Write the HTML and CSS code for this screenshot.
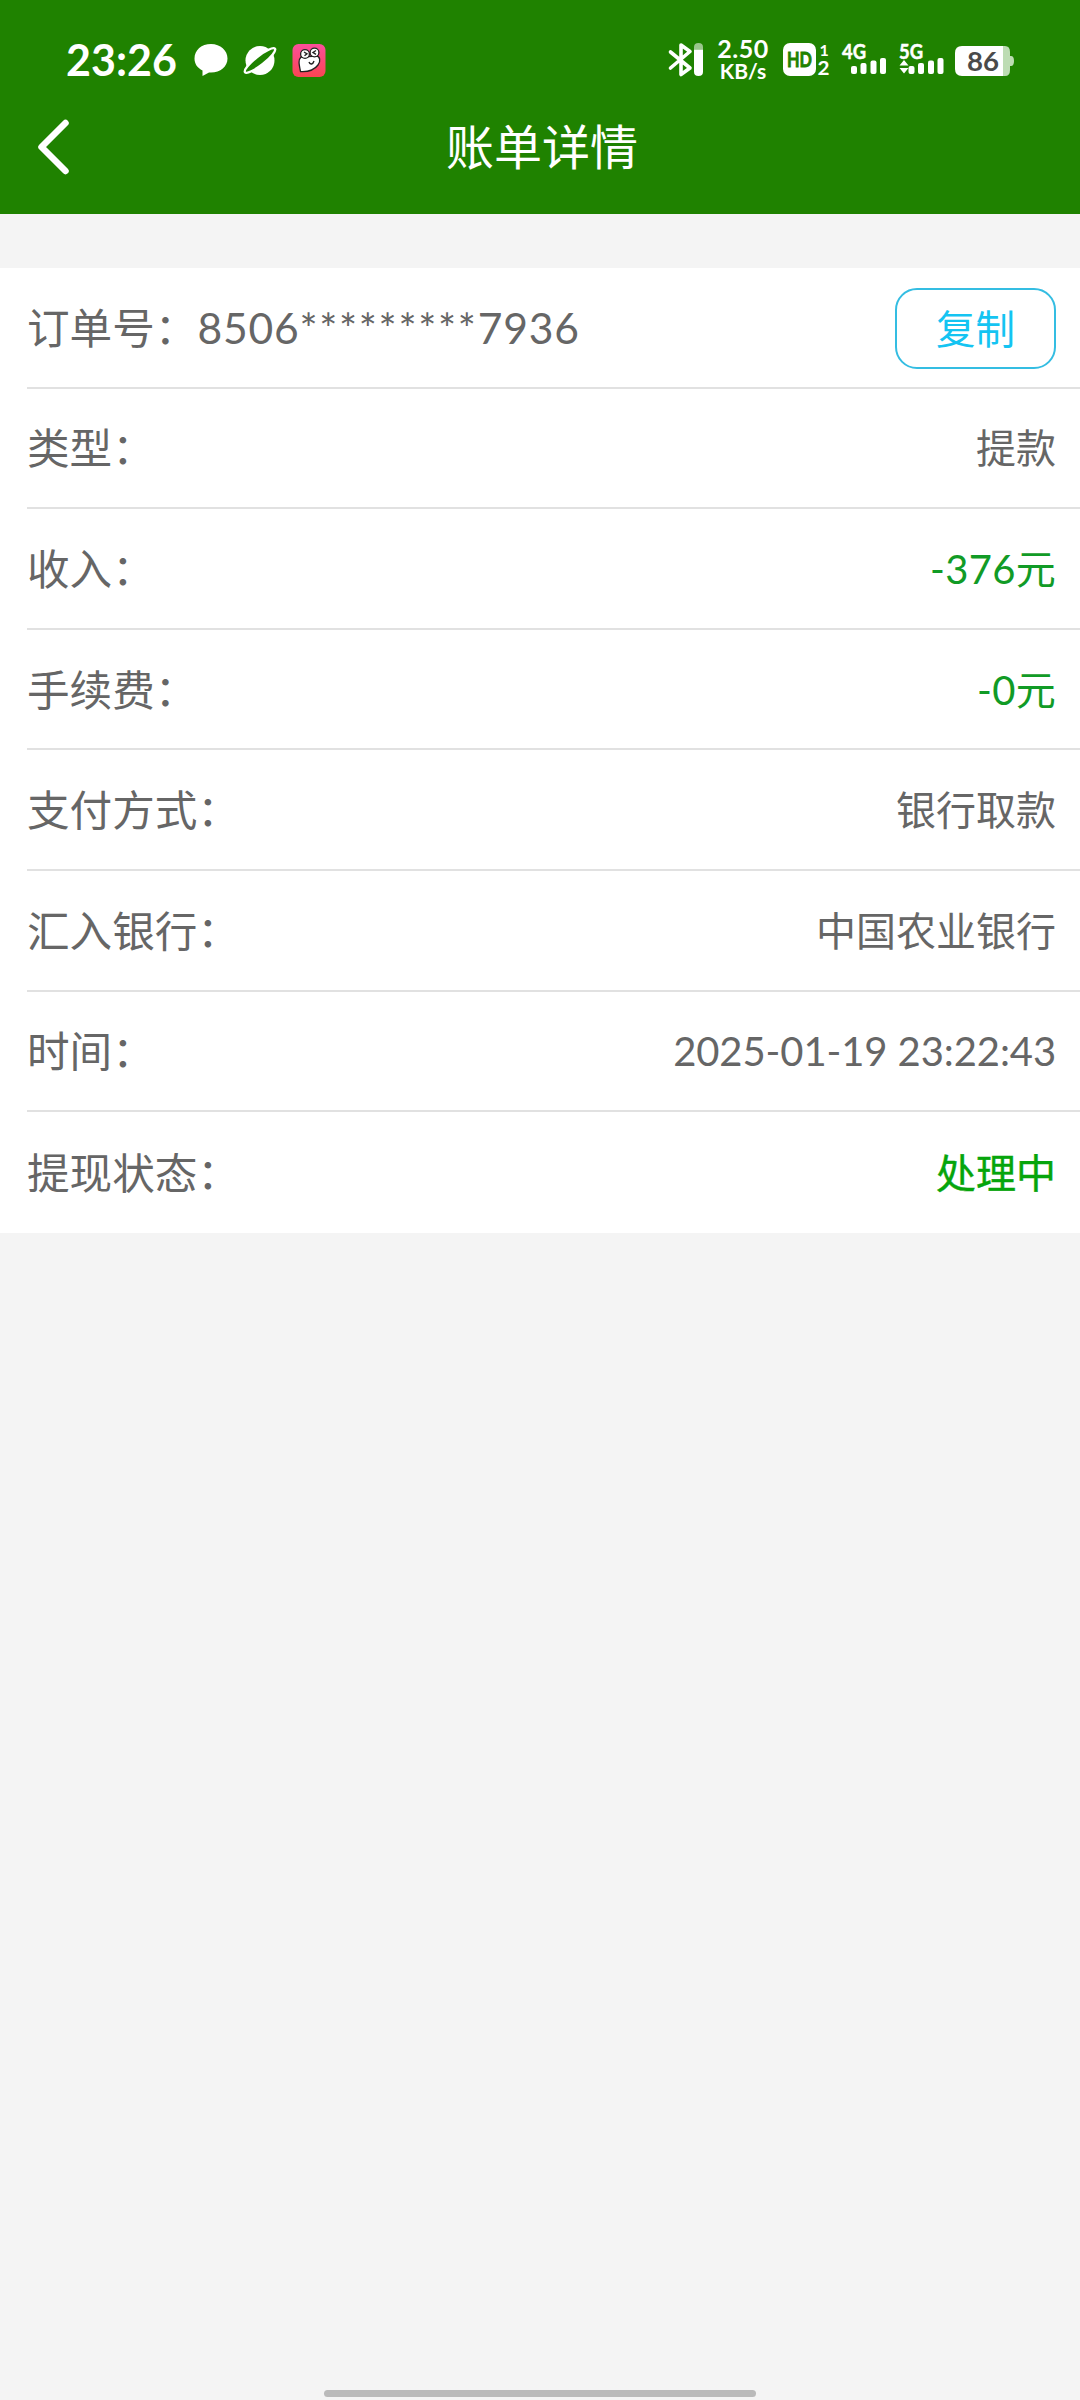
FILE: index.html
```html
<!DOCTYPE html>
<html lang="zh-CN">
<head>
  <meta charset="UTF-8" />
  <title>账单详情</title>
  <link rel="stylesheet" href="styles.css">
</head>
<body>

<header class="header">
  <div class="status-bar">
    <div class="status-left">
      <span class="time">23:26</span>
      <svg width="34" height="40" viewBox="0 0 34 40">
        <path d="M17 4C7.500 4 .5 10 .5 18.500c0 5.500 3 9.500 8 12V36l6.500-3.600 2 .1c9.500 0 16.500-6 16.500-14S26.500 4 17 4z" fill="#fff"/>
      </svg>
      <svg width="34" height="40" viewBox="0 0 34 40">
        <circle cx="17" cy="20.500" r="14.500" fill="#fff"/>
        <ellipse cx="17" cy="20.500" rx="19" ry="4.500" transform="rotate(-38 17 20.500)" fill="#1f8200" stroke="#fff" stroke-width="2.400"/>
      </svg>
      <svg width="34" height="40" viewBox="0 0 34 40">
        <defs>
          <linearGradient id="pink" x1="0" y1="0" x2="0" y2="1">
            <stop offset="0" stop-color="#fb4f9a"/>
            <stop offset="1" stop-color="#fa4553"/>
          </linearGradient>
        </defs>
        <rect x=".5" y="4" width="33" height="33" rx="6" fill="url(#pink)"/>
        <g fill="#fff" stroke="#222" stroke-width="1.300" stroke-linejoin="round">
          <path d="M9 17c-3 3-2 7-.5 14.500C17 32 23 29 26 25c3-4 2-9-2-9z"/>
          <circle cx="13" cy="14" r="4.400"/>
          <circle cx="22.500" cy="12.500" r="4.400"/>
        </g>
        <path d="M12 12l3 1.800-2.500 2M24 10.500l-3 2 3 1.800M17 22c1 3 4 2.500 5-1" fill="none" stroke="#222" stroke-width="1.400"/>
      </svg>
    </div>
    <div class="status-right">
      <svg width="36" height="40" viewBox="0 0 36 40">
        <path d="M2.500 12L22 28l-9 6.500V5l9 6.500L2.500 28" fill="none" stroke="#fff" stroke-width="3.600" stroke-linejoin="round" stroke-linecap="round"/>
        <path d="M26 9.500V7q0-4 4.500-4T35 7v2.500z" fill="#fff" opacity=".55"/>
        <path d="M26 9.500h9V32q0 4-4.500 4T26 32z" fill="#fff"/>
      </svg>
      <div class="speed">
        <span class="speed-num">2.50</span>
        <span class="speed-unit">KB/s</span>
      </div>
      <svg class="hd" width="48" height="40" viewBox="0 0 48 40">
        <rect x="0" y="3" width="33" height="33" rx="7" fill="#fff"/>
        <text x="4" y="27" textLength="25" lengthAdjust="spacingAndGlyphs" font-size="21" fill="#1f8200" stroke="#1f8200" stroke-width=".8">HD</text>
        <text x="36.500" y="15.500" font-size="16" fill="#fff">1</text>
        <text x="34.500" y="34.500" textLength="12" lengthAdjust="spacingAndGlyphs" font-size="18" fill="#fff">2</text>
      </svg>
      <svg class="signal" width="46" height="40" viewBox="0 0 46 40">
        <text x="0" y="18.500" textLength="24" lengthAdjust="spacingAndGlyphs" font-size="20" fill="#fff" stroke="#fff" stroke-width=".5">4G</text>
        <g fill="#fff">
          <rect x="9" y="26" width="6" height="8" rx="2"/>
          <rect x="18.500" y="23" width="6" height="11" rx="2"/>
          <rect x="28.500" y="20.500" width="6" height="13.500" rx="2"/>
          <rect x="38" y="18" width="6" height="16" rx="2"/>
        </g>
      </svg>
      <svg class="signal" width="46" height="40" viewBox="0 0 46 40">
        <text x="0" y="18.500" textLength="24" lengthAdjust="spacingAndGlyphs" font-size="20" fill="#fff" stroke="#fff" stroke-width=".5">5G</text>
        <g fill="#fff">
          <path d="M.5 25.500L5 20l4.500 5.500zM.5 28h9L5 33.500z"/>
          <rect x="9.500" y="26" width="6" height="8" rx="2"/>
          <rect x="19" y="23" width="6" height="11" rx="2"/>
          <rect x="29" y="20.500" width="6" height="13.500" rx="2"/>
          <rect x="38.500" y="18" width="6" height="16" rx="2"/>
        </g>
      </svg>
      <svg class="battery" width="60" height="40" viewBox="0 0 60 40">
        <path d="M48 6h2q5 0 5 6v4h1q3 0 3 5t-3 5h-1v4q0 6-5 6h-2z" fill="#bddcb3"/>
        <path d="M48 6H7Q0 6 0 13v16q0 7 7 7h41z" fill="#fff"/>
        <text x="12" y="31" textLength="32" lengthAdjust="spacingAndGlyphs" font-size="27" fill="#4a4a4a">86</text>
      </svg>
    </div>
  </div>
  <div class="nav-bar">
    <svg class="back" width="40" height="60" viewBox="0 0 40 60">
      <path d="M29.500 6L5.500 30l24 24" fill="none" stroke="#fff" stroke-width="6.500" stroke-linecap="round" stroke-linejoin="round"/>
    </svg>
    <h1 class="title">账单详情</h1>
  </div>
</header>

<main class="card">
  <div class="row">
    <span class="label">订单号：<span class="digits">8506</span><span class="stars">*********</span><span class="digits">7936</span></span>
    <button class="copy">复制</button>
  </div>
  <div class="row">
    <span class="label">类型：</span>
    <span class="value">提款</span>
  </div>
  <div class="row">
    <span class="label">收入：</span>
    <span class="value amount">-376元</span>
  </div>
  <div class="row">
    <span class="label">手续费：</span>
    <span class="value amount">-0元</span>
  </div>
  <div class="row">
    <span class="label">支付方式：</span>
    <span class="value">银行取款</span>
  </div>
  <div class="row">
    <span class="label">汇入银行：</span>
    <span class="value">中国农业银行</span>
  </div>
  <div class="row">
    <span class="label">时间：</span>
    <span class="value date">2025-01-19 23:22:43</span>
  </div>
  <div class="row">
    <span class="label">提现状态：</span>
    <span class="value status">处理中</span>
  </div>
</main>

<div class="home-bar"></div>

</body>
</html>
```

FILE: styles.css
```css
* {
  box-sizing: border-box;
}
body {
  margin: 0;
  height: 2400px;
  display: flex;
  flex-direction: column;
  background: #f4f4f4;
  color: #666;
  font-family: Lato, "Noto Sans CJK SC", sans-serif;
}
svg {
  display: block;
  flex: none;
  overflow: visible;
}
svg text {
  font-family: Lato, sans-serif;
  font-weight: bold;
}
.header {
  height: 214px;
  background: #1f8200;
  color: #fff;
}
.status-bar {
  height: 80px;
  padding: 40px 65px 0 66px;
  display: flex;
  justify-content: space-between;
}
.status-left {
  display: flex;
  gap: 15px;
}
.time {
  width: 113px;
  font-size: 43px;
  line-height: 40px;
  font-weight: bold;
  white-space: nowrap;
}
.status-right {
  display: flex;
}
.speed {
  width: 54px;
  margin-left: 12px;
  display: flex;
  flex-direction: column;
  align-items: center;
  font-weight: bold;
}
.speed-num {
  font-size: 25px;
  line-height: 17px;
  letter-spacing: 0.5px;
}
.speed-unit {
  font-size: 21px;
  line-height: 28px;
}
.hd {
  margin-left: 13px;
}
.signal {
  margin-left: 11px;
}
.battery {
  margin-left: 10px;
}
.nav-bar {
  height: 134px;
  display: grid;
  grid-template-columns: 104px 1fr 100px;
}
.back {
  margin: 37px 0 0 36px;
}
.title {
  margin: 0;
  font-size: 48px;
  line-height: 133px;
  font-weight: normal;
  text-align: center;
}
.card {
  margin-top: 54px;
  padding-left: 27px;
  background: #fff;
}
.row {
  height: 120.6px;
  padding-right: 24px;
  display: flex;
  align-items: center;
  justify-content: space-between;
  border-bottom: 2px solid #e1e1e1;
}
.row:last-child {
  border-bottom: none;
}
.label {
  padding-bottom: 4px;
  font-size: 42.600px;
  white-space: nowrap;
}
.digits {
  letter-spacing: 0.8px;
}
.stars {
  letter-spacing: 1.700px;
}
.value {
  padding-bottom: 3px;
  font-size: 40px;
  white-space: nowrap;
}
.amount {
  color: #119b26;
  letter-spacing: 0.3px;
}
.date {
  padding-bottom: 0;
  letter-spacing: -0.1px;
}
.status {
  color: #06a50b;
  -webkit-text-stroke: 0.4px #06a50b;
}
.copy {
  width: 161px;
  height: 81px;
  margin-top: 2px;
  padding: 0 0 4px;
  background: #fff;
  border: 2px solid #34bde2;
  border-radius: 22px;
  color: #14c4f2;
  font-family: inherit;
  font-size: 39.500px;
}
.home-bar {
  width: 432px;
  height: 7px;
  margin: auto auto 3px;
  border-radius: 4px;
  background: #bababa;
}
```
